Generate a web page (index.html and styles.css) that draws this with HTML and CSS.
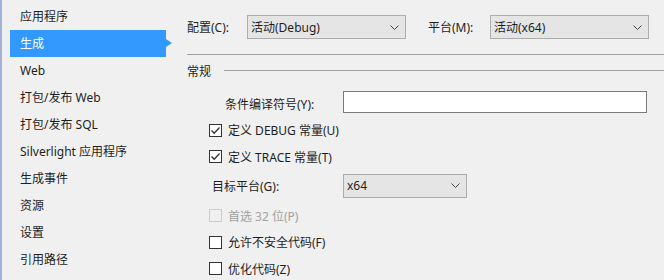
FILE: index.html
```html
<!DOCTYPE html>
<html lang="zh-CN">
<head>
<meta charset="utf-8">
<link rel="stylesheet" href="styles.css">
</head>
<body>
<div class="page">
  <nav class="sidebar">
    <div class="nav-item">应用程序</div>
    <div class="nav-item active">生成</div>
    <div class="nav-item">Web</div>
    <div class="nav-item">打包/发布 Web</div>
    <div class="nav-item">打包/发布 SQL</div>
    <div class="nav-item">Silverlight 应用程序</div>
    <div class="nav-item">生成事件</div>
    <div class="nav-item">资源</div>
    <div class="nav-item">设置</div>
    <div class="nav-item">引用路径</div>
  </nav>
  <main class="main">
    <div class="toprow">
      <span class="top-label cfg">配置(C):</span>
      <div class="combo wide"><span>活动(Debug)</span><svg class="chev" width="9" height="5" viewBox="0 0 9 5"><polyline points="0.5,0.5 4.5,4.5 8.5,0.5" fill="none" stroke="#444" stroke-width="1"/></svg></div>
      <span class="top-label plat">平台(M):</span>
      <div class="combo wide"><span>活动(x64)</span><svg class="chev" width="9" height="5" viewBox="0 0 9 5"><polyline points="0.5,0.5 4.5,4.5 8.5,0.5" fill="none" stroke="#444" stroke-width="1"/></svg></div>
    </div>
    <div class="sep"></div>
    <div class="group-head"><span>常规</span><div class="group-line"></div></div>
    <div class="form">
      <div class="row text-row">
        <span class="lbl lbl-cond">条件编译符号(Y):</span>
        <div class="textbox"></div>
      </div>
      <div class="row check-row first-check">
        <span class="box checked"><svg width="11" height="11" viewBox="0 0 11 11"><polyline points="1.5,5.5 4.2,8.3 9.5,2.5" fill="none" stroke="#333" stroke-width="1.3"/></svg></span>
        <span>定义 DEBUG 常量(U)</span>
      </div>
      <div class="row check-row">
        <span class="box checked"><svg width="11" height="11" viewBox="0 0 11 11"><polyline points="1.5,5.5 4.2,8.3 9.5,2.5" fill="none" stroke="#333" stroke-width="1.3"/></svg></span>
        <span>定义 TRACE 常量(T)</span>
      </div>
      <div class="row combo-row">
        <span class="lbl lbl-target">目标平台(G):</span>
        <div class="combo narrow"><span>x64</span><svg class="chev" width="9" height="5" viewBox="0 0 9 5"><polyline points="0.5,0.5 4.5,4.5 8.5,0.5" fill="none" stroke="#444" stroke-width="1"/></svg></div>
      </div>
      <div class="row check-row disabled after-combo">
        <span class="box"></span>
        <span>首选 32 位(P)</span>
      </div>
      <div class="row check-row">
        <span class="box"></span>
        <span>允许不安全代码(F)</span>
      </div>
      <div class="row check-row">
        <span class="box"></span>
        <span>优化代码(Z)</span>
      </div>
    </div>
  </main>
</div>
</body>
</html>
```

FILE: styles.css
```css
html, body {
  margin: 0;
  padding: 0;
  background: #f0f0f0;
}
body {
  font-family: "Noto Sans", "Noto Sans CJK SC", sans-serif;
  font-size: 12px;
  color: #1e1e1e;
  overflow: hidden;
}
.page {
  display: flex;
  height: 280px;
  border-left: 2px solid #a3b1d6;
}
.sidebar {
  width: 156px;
  flex: none;
  padding: 3px 0 0 8px;
}
.nav-item {
  height: 27px;
  line-height: 28px;
  padding-left: 10px;
  white-space: nowrap;
}
.nav-item.active {
  background: #3399ff;
  color: #fff;
  position: relative;
}
.nav-item.active::after {
  content: "";
  position: absolute;
  right: -6px;
  top: 9px;
  border-left: 6px solid #3399ff;
  border-top: 4.5px solid transparent;
  border-bottom: 4.5px solid transparent;
}
.main {
  flex: 1;
  padding-left: 21px;
  min-width: 0;
}
.toprow {
  display: flex;
  align-items: center;
  height: 24px;
  margin-top: 15px;
}
.top-label {
  flex: none;
}
.cfg { width: 60px; }
.plat { width: 62px; margin-left: 22px; }
.combo {
  box-sizing: border-box;
  height: 24px;
  background: #e5e5e5;
  border: 1px solid #acacac;
  display: flex;
  align-items: center;
  justify-content: space-between;
  padding: 0 6px 0 3px;
  flex: none;
}
.combo.wide { width: 159px; }
.combo.narrow { width: 124px; }
.chev { flex: none; }
.sep {
  height: 1px;
  background: #a0a0a0;
  margin-top: 15px;
}
.group-head {
  display: flex;
  align-items: center;
  height: 16px;
  margin-top: 8px;
}
.group-line {
  flex: 1;
  height: 1px;
  background: #a0a0a0;
  margin-left: 13px;
  margin-top: -2px;
}
.form {
  margin-top: 12px;
}
.row {
  display: flex;
  align-items: center;
}
.text-row {
  height: 22px;
}
.lbl-cond {
  padding-left: 38px;
  width: 118px;
  flex: none;
  padding-top: 3px;
}
.textbox {
  box-sizing: border-box;
  width: 304px;
  height: 22px;
  background: #fff;
  border: 1px solid #7a7a7a;
}
.check-row {
  height: 26.4px;
  padding-left: 22px;
}
.first-check { margin-top: 4px; }
.box {
  box-sizing: border-box;
  width: 13px;
  height: 13px;
  border: 1px solid #333;
  background: #fff;
  margin-right: 6px;
  flex: none;
  display: flex;
  align-items: center;
  justify-content: center;
}
.combo-row {
  height: 24px;
  margin-top: 4px;
}
.lbl-target {
  padding-left: 25px;
  width: 131px;
  flex: none;
}
.after-combo { margin-top: 5px; }
.disabled { color: #a2a2a2; }
.disabled .box { border-color: #cccccc; background: #f0f0f0; }
```
